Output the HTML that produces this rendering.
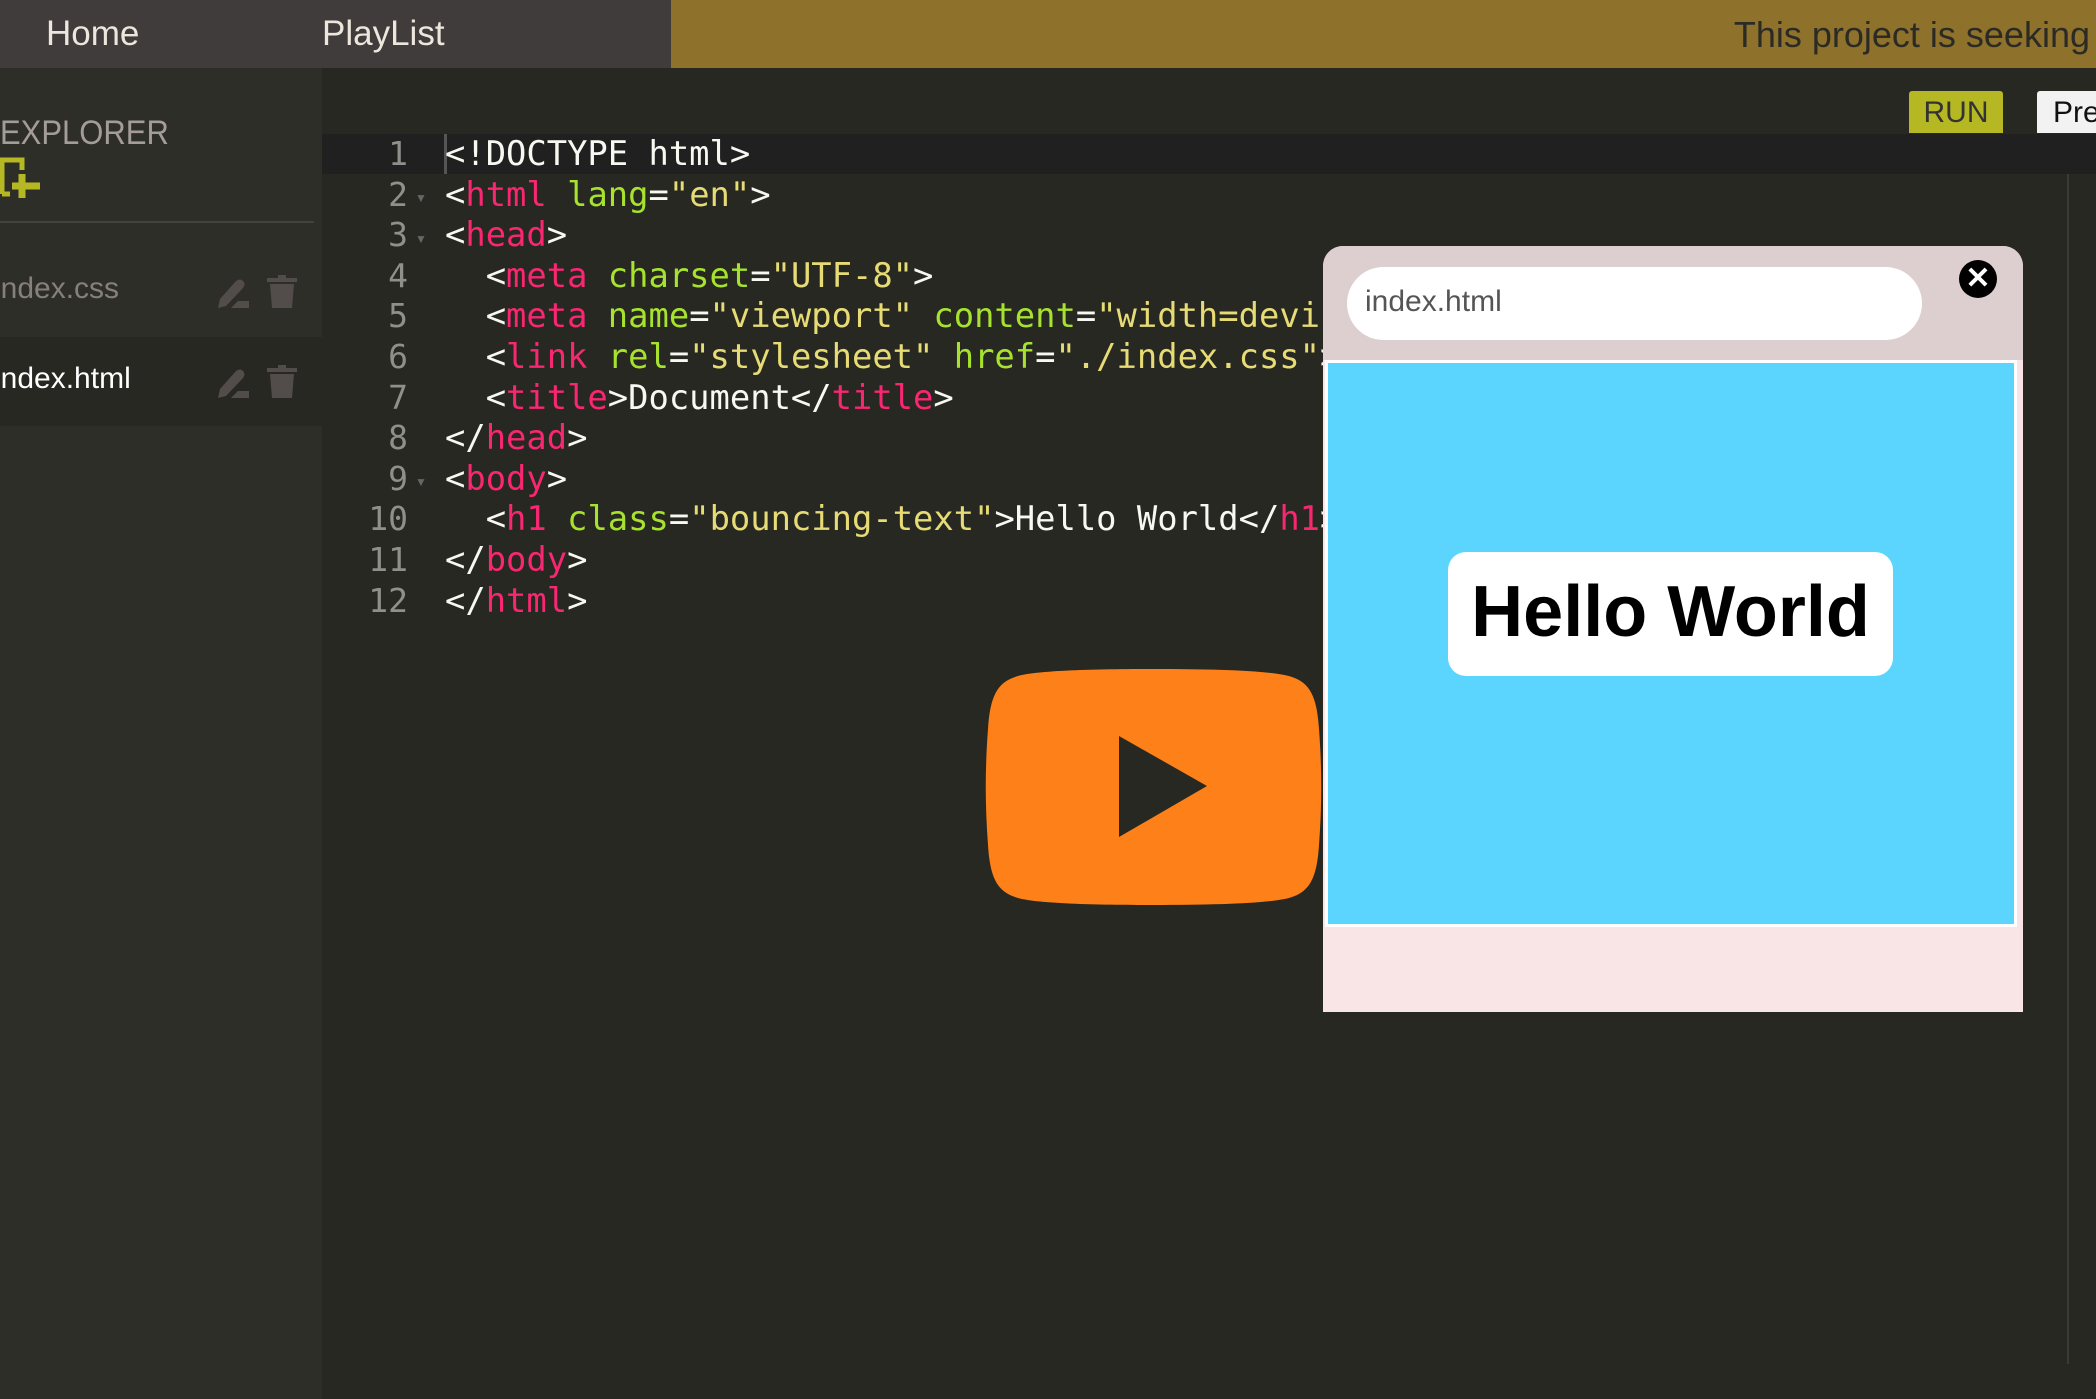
<!DOCTYPE html>
<html><head><meta charset="utf-8"><style>
*{margin:0;padding:0;box-sizing:border-box}
body{width:2096px;height:1399px;overflow:hidden;background:#272822;font-family:"Liberation Sans",sans-serif;position:relative}
.nav{position:absolute;left:0;top:0;width:671px;height:68px;background:#403c3c;color:#ece6dc;font-size:35px}
.nav span{position:absolute;top:14px}
.gold{position:absolute;left:671px;top:0;width:1425px;height:68px;background:#8e722b;color:#2b2a24;font-size:36px;text-align:right;padding-right:6px;padding-top:14px;white-space:nowrap;overflow:hidden}
.side{position:absolute;left:0;top:68px;width:322px;height:1331px;background:#2e2e29}
.abs{position:absolute}
.code{position:absolute;left:445px;top:134px;font-family:"DejaVu Sans Mono","Liberation Mono",monospace;font-size:33.8px;line-height:40.6px;color:#f8f8f2;white-space:pre}
.nums{position:absolute;left:322px;top:134px;width:86px;text-align:right;font-family:"DejaVu Sans Mono",monospace;font-size:33px;line-height:40.6px;color:#8f908a;white-space:pre}
.t{color:#f92672}.a{color:#a6e22e}.s{color:#e6db74}
</style></head><body>
<div class="nav"><span style="left:46px">Home</span><span style="left:322px">PlayList</span></div>
<div class="gold">This project is seeking</div>
<div class="side">
<div class="abs" style="left:0;top:47px;color:#a49c98;font-size:31px;transform:scaleY(1.1)">EXPLORER</div>
<svg class="abs" style="left:0;top:86px" width="44" height="46" viewBox="0 0 44 46"><path d="M2 40V6h20v10" fill="none" stroke="#b5b823" stroke-width="5"/><path d="M2 40h8" stroke="#b5b823" stroke-width="5"/><path d="M22 20v24M12 32h28" stroke="#b5b823" stroke-width="7"/></svg>
<div class="abs" style="left:0;top:153px;width:314px;height:2px;background:#45423e"></div>
<div class="abs" style="left:0;top:269px;width:322px;height:89px;background:#272822"></div>
<div class="abs" style="left:-6px;top:204px;color:#85807c;font-size:30px">index.css</div>
<div class="abs" style="left:-6px;top:294px;color:#fff;font-size:30px">index.html</div>
<svg class="abs" style="left:214px;top:204px" width="90" height="40" viewBox="0 0 90 40"><path d="M4 36l2-9 16-18q4-3 7 0t0 7L12 34z" fill="#524c4a"/><path d="M17 36h18v-7H24z" fill="#524c4a"/><path d="M53 6h30v4H53zM64 3h8v4h-8zM56 12h24l-2 24H58z" fill="#524c4a"/></svg>
<svg class="abs" style="left:214px;top:294px" width="90" height="40" viewBox="0 0 90 40"><path d="M4 36l2-9 16-18q4-3 7 0t0 7L12 34z" fill="#524c4a"/><path d="M17 36h18v-7H24z" fill="#524c4a"/><path d="M53 6h30v4H53zM64 3h8v4h-8zM56 12h24l-2 24H58z" fill="#524c4a"/></svg>
</div>
<div class="abs" style="left:322px;top:134px;width:1774px;height:40px;background:#202020"></div>
<div class="abs" style="left:444px;top:134px;width:3px;height:40px;background:#555"></div>
<div class="abs" style="left:2067px;top:174px;width:2px;height:1190px;background:#3a3a36"></div>
<div class="abs" style="left:1909px;top:91px;width:94px;height:42px;background:#b5b823;border-radius:3px 3px 0 0;color:#333;font-size:30px;text-align:center;padding-top:5px">RUN</div>
<div class="abs" style="left:2037px;top:91px;width:70px;height:42px;background:#f2f2f2;border-radius:3px 0 0 0;color:#111;font-size:30px;padding-top:5px;padding-left:16px">Pre</div>
<div class="nums">1
2
3
4
5
6
7
8
9
10
11
12</div>
<div class="abs" style="left:415px;top:178px;color:#666;font-size:12px;line-height:40.6px">▼<br>▼<br><br><br><br><br><br>▼</div>
<div class="code">&lt;!DOCTYPE html&gt;
&lt;<span class="t">html</span> <span class="a">lang</span>=<span class="s">"en"</span>&gt;
&lt;<span class="t">head</span>&gt;
  &lt;<span class="t">meta</span> <span class="a">charset</span>=<span class="s">"UTF-8"</span>&gt;
  &lt;<span class="t">meta</span> <span class="a">name</span>=<span class="s">"viewport"</span> <span class="a">content</span>=<span class="s">"width=device</span>
  &lt;<span class="t">link</span> <span class="a">rel</span>=<span class="s">"stylesheet"</span> <span class="a">href</span>=<span class="s">"./index.css"</span>&gt;
  &lt;<span class="t">title</span>&gt;Document&lt;/<span class="t">title</span>&gt;
&lt;/<span class="t">head</span>&gt;
&lt;<span class="t">body</span>&gt;
  &lt;<span class="t">h1</span> <span class="a">class</span>=<span class="s">"bouncing-text"</span>&gt;Hello World&lt;/<span class="t">h1</span>&gt;
&lt;/<span class="t">body</span>&gt;
&lt;/<span class="t">html</span>&gt;</div>
<svg class="abs" style="left:985px;top:669px" width="337" height="236" viewBox="0 0 337 236"><path d="M168 0C100 0 45 2 30 8 12 14 5 28 3 60 0 100 0 136 3 176 5 208 12 222 30 228 45 234 100 236 168 236S291 234 307 228C325 222 332 208 334 176 337 136 337 100 334 60 332 28 325 14 307 8 291 2 236 0 168 0z" fill="#fd8019"/><path d="M134 67L222 117 134 168z" fill="#272822"/></svg>
<div class="abs" style="left:1323px;top:246px;width:700px;height:766px;background:#f9e5e5;border-radius:20px 20px 0 0;overflow:hidden">
<div class="abs" style="left:0;top:0;width:700px;height:114px;background:#ddcfcf"></div>
<div class="abs" style="left:24px;top:21px;width:575px;height:73px;background:#fff;border-radius:37px;color:#555;font-size:30px;padding:18px 0 0 18px">index.html</div>
<div class="abs" style="left:636px;top:14px;width:38px;height:38px;border-radius:50%;background:#000;color:#fff;font-size:30px;font-weight:bold;text-align:center;line-height:37px">✕</div>
<div class="abs" style="left:2px;top:114px;width:692px;height:567px;background:#5bd5fd;border:3px solid #fff"></div>
<div class="abs" style="left:125px;top:306px;width:445px;height:124px;background:#fff;border-radius:18px;font-size:72px;font-weight:bold;text-align:center;line-height:120px;color:#000;white-space:nowrap">Hello World</div>
</div>
</body></html>
